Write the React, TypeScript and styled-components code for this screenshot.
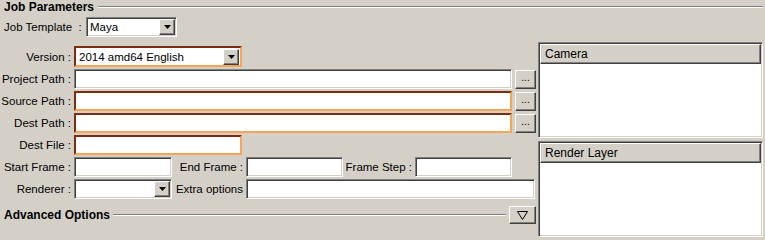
import React from "react";
import styled, { createGlobalStyle, css } from "styled-components";

const face = "#d4d0c8";

const GlobalStyle = createGlobalStyle`
  html, body {
    margin: 0;
    padding: 0;
    background: ${face};
  }
  body {
    font-family: "Liberation Sans", Arial, sans-serif;
    font-size: 11.5px;
    color: #000;
  }
  * {
    box-sizing: border-box;
  }
`;

const sunken = css`
  border-style: solid;
  border-width: 1px;
  border-color: #808080 #fff #fff #808080;
  box-shadow: inset 1px 1px #404040, inset -1px -1px ${face};
`;

const hot = css`
  border-style: solid;
  border-width: 2px;
  border-color: #7d2c12 #f8a557 #f8a557 #7d2c12;
`;

const raised = css`
  border-style: solid;
  border-width: 1px;
  border-color: #fff #404040 #404040 #fff;
  box-shadow: inset -1px -1px #808080;
  background: ${face};
`;

function App(): React.ReactElement {
  return (
    <Page>
      <GlobalStyle />
      <SectionHead>
        <Heading>Job Parameters</Heading>
        <Rule />
      </SectionHead>

      <TemplateRow>
        <TemplateLabel>Job Template  :</TemplateLabel>
        <Combo value="Maya" width={91} />
      </TemplateRow>

      <Body>
        <Form>
          <Row $h={21}>
            <Label>Version :</Label>
            <Combo value="2014 amd64 English" width={168} hot />
          </Row>
          <Row>
            <Label>Project Path :</Label>
            <Field $w={438} />
            <Browse>...</Browse>
          </Row>
          <Row>
            <Label>Source Path :</Label>
            <Field $w={438} $hot />
            <Browse>...</Browse>
          </Row>
          <Row>
            <Label>Dest Path :</Label>
            <Field $w={438} $hot />
            <Browse>...</Browse>
          </Row>
          <Row>
            <Label>Dest File :</Label>
            <Field $w={168} $hot />
          </Row>
          <Row>
            <Label>Start Frame :</Label>
            <Field $w={98} />
            <Label>End Frame :</Label>
            <Field $w={97} />
            <Label $w={72}>Frame Step :</Label>
            <Field $w={97} />
          </Row>
          <Row>
            <Label>Renderer :</Label>
            <Combo value="" width={98} />
            <Label>Extra options</Label>
            <Field $w={289} />
          </Row>

          <AdvancedRow>
            <Heading>Advanced Options</Heading>
            <Rule />
            <Toggle>
              <svg width="11" height="9" viewBox="0 0 11 9">
                <polygon
                  points="0.5,0.5 10.5,0.5 5.5,8.5"
                  fill="none"
                  stroke="#000"
                  strokeWidth="1"
                />
              </svg>
            </Toggle>
          </AdvancedRow>
        </Form>

        <Side>
          <Panel>
            <PanelHeader>Camera</PanelHeader>
          </Panel>
          <Panel>
            <PanelHeader>Render Layer</PanelHeader>
          </Panel>
        </Side>
      </Body>
    </Page>
  );
}

export default App;

type ComboProps = {
  value: string;
  width: number;
  hot?: boolean;
};

function Combo({ value, width, hot: isHot }: ComboProps): React.ReactElement {
  return (
    <Field $w={width} $hot={isHot}>
      <ComboText>{value}</ComboText>
      <DropButton>
        <svg width="7" height="4" viewBox="0 0 7 4">
          <polygon points="0,0 7,0 3.5,4" fill="#000" />
        </svg>
      </DropButton>
    </Field>
  );
}

const Page = styled.div`
  width: 765px;
  height: 239px;
  padding-right: 2px;
  display: flex;
  flex-direction: column;
  overflow: hidden;
`;

const SectionHead = styled.div`
  display: flex;
  align-items: center;
  gap: 4px;
  height: 14px;
  padding-left: 4px;
`;

const Heading = styled.span`
  font-weight: bold;
  font-size: 12px;
  white-space: nowrap;
`;

const Rule = styled.div`
  flex: 1;
  border-top: 1px solid #808080;
  border-bottom: 1px solid #fff;
`;

const TemplateRow = styled.div`
  display: flex;
  align-items: center;
  height: 20px;
  margin-top: 3px;
  padding-left: 4px;
`;

const TemplateLabel = styled.span`
  width: 82px;
  white-space: pre;
`;

const Body = styled.div`
  display: flex;
  margin-top: 5px;
`;

const Form = styled.div`
  width: 536px;
  padding-top: 4px;
  display: flex;
  flex-direction: column;
  gap: 2px;
`;

const Row = styled.div<{ $h?: number }>`
  display: flex;
  align-items: center;
  height: ${(p) => p.$h ?? 20}px;
`;

const Label = styled.span<{ $w?: number }>`
  width: ${(p) => p.$w ?? 74}px;
  flex-shrink: 0;
  padding-right: 3px;
  text-align: right;
  white-space: nowrap;
`;

const Field = styled.div<{ $w: number; $hot?: boolean }>`
  width: ${(p) => p.$w}px;
  height: 100%;
  flex-shrink: 0;
  background: #fff;
  display: flex;
  align-items: center;
  padding: 1px;
  ${(p) => (p.$hot ? hot : sunken)}
`;

const ComboText = styled.span`
  flex: 1;
  padding-left: 2px;
  white-space: nowrap;
  overflow: hidden;
`;

const DropButton = styled.div`
  width: 16px;
  height: 16px;
  display: flex;
  align-items: center;
  justify-content: center;
  ${raised}
`;

const Browse = styled.div`
  width: 21px;
  height: 19px;
  margin-left: 3px;
  display: flex;
  align-items: center;
  justify-content: center;
  font-size: 10px;
  line-height: 1;
  padding-bottom: 2px;
  ${raised}
`;

const AdvancedRow = styled.div`
  display: flex;
  align-items: center;
  gap: 3px;
  height: 18px;
  margin-top: 5px;
  padding-left: 4px;
`;

const Toggle = styled.div`
  width: 27px;
  height: 18px;
  display: flex;
  align-items: center;
  justify-content: center;
  ${raised}
`;

const Side = styled.div`
  width: 225px;
  margin-left: 2px;
  display: flex;
  flex-direction: column;
  gap: 3px;
`;

const Panel = styled.div`
  height: 96px;
  background: #fff;
  ${sunken}
  padding: 1px;
`;

const PanelHeader = styled.div`
  height: 20px;
  display: flex;
  align-items: center;
  padding-left: 4px;
  background: ${face};
  font-size: 12px;
  border-style: solid;
  border-width: 1px;
  border-color: #fff #404040 #404040 #fff;
  box-shadow: inset -1px -1px #808080;
`;
